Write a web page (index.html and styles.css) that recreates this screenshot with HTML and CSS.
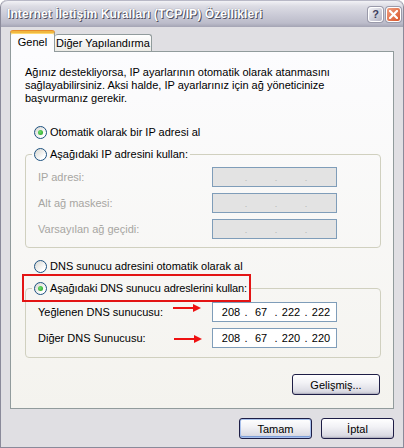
FILE: index.html
```html
<!DOCTYPE html>
<html lang="tr">
<head>
<meta charset="utf-8">
<link rel="stylesheet" href="styles.css">
</head>
<body>
<div class="window">
  <div class="titlebar">
    <span class="title">Internet İletişim Kuralları (TCP/IP) Özellikleri</span>
    <span class="tb-btn help">?</span>
    <span class="tb-btn close"><svg width="9" height="9" viewBox="0 0 9 9"><path d="M1 1 L8 8 M8 1 L1 8" stroke="#fff" stroke-width="2.2" stroke-linecap="square"/></svg></span>
  </div>
  <div class="content">
    <div class="tabs">
      <div class="tab active">Genel</div>
      <div class="tab">Diğer Yapılandırma</div>
    </div>
    <div class="panel">
      <p class="intro">Ağınız destekliyorsa, IP ayarlarının otomatik olarak atanmasını<br>sağlayabilirsiniz. Aksi halde, IP ayarlarınız için ağ yöneticinize<br>başvurmanız gerekir.</p>
      <div class="radio checked opt"><span class="circle"></span>Otomatik olarak bir IP adresi al</div>
      <fieldset class="group">
        <legend><span class="radio"><span class="circle"></span>Aşağıdaki IP adresini kullan:</span></legend>
        <div class="field disabled"><span class="lbl">IP adresi:</span><span class="ip"><span class="seg"></span><span class="dot">.</span><span class="seg"></span><span class="dot">.</span><span class="seg"></span><span class="dot">.</span><span class="seg"></span></span></div>
        <div class="field disabled"><span class="lbl">Alt ağ maskesi:</span><span class="ip"><span class="seg"></span><span class="dot">.</span><span class="seg"></span><span class="dot">.</span><span class="seg"></span><span class="dot">.</span><span class="seg"></span></span></div>
        <div class="field disabled"><span class="lbl">Varsayılan ağ geçidi:</span><span class="ip"><span class="seg"></span><span class="dot">.</span><span class="seg"></span><span class="dot">.</span><span class="seg"></span><span class="dot">.</span><span class="seg"></span></span></div>
      </fieldset>
      <div class="radio opt dns-auto"><span class="circle"></span>DNS sunucu adresini otomatik olarak al</div>
      <fieldset class="group dns">
        <legend><span class="radio checked tight"><span class="circle"></span>Aşağıdaki DNS sunucu adreslerini kullan:</span></legend>
        <div class="field"><span class="lbl">Yeğlenen DNS sunucusu:</span><span class="ip"><span class="seg">208</span><span class="dot">.</span><span class="seg">67</span><span class="dot">.</span><span class="seg">222</span><span class="dot">.</span><span class="seg">222</span></span></div>
        <div class="field"><span class="lbl">Diğer DNS Sunucusu:</span><span class="ip"><span class="seg">208</span><span class="dot">.</span><span class="seg">67</span><span class="dot">.</span><span class="seg">220</span><span class="dot">.</span><span class="seg">220</span></span></div>
      </fieldset>
      <div class="adv-row"><button class="btn adv">Gelişmiş...</button></div>
      <div class="redbox"></div>
      <svg class="arrow a1" width="28" height="8" viewBox="0 0 28 8"><rect x="0" y="3" width="21" height="2" fill="#ee1111"/><path d="M20 0 L28 4 L20 8 Z" fill="#ee1111"/></svg>
      <svg class="arrow a2" width="28" height="8" viewBox="0 0 28 8"><rect x="0" y="3" width="21" height="2" fill="#ee1111"/><path d="M20 0 L28 4 L20 8 Z" fill="#ee1111"/></svg>
    </div>
    <div class="actions">
      <button class="btn default">Tamam</button>
      <button class="btn">İptal</button>
    </div>
  </div>
</div>
</body>
</html>
```
FILE: styles.css
```css
html, body {
  margin: 0;
  padding: 0;
  background: #ffffff;
}
body {
  font-family: "Liberation Sans", Arial, sans-serif;
  font-size: 11px;
  color: #000;
}
.window {
  width: 404px;
  height: 448px;
  box-sizing: border-box;
  background: #e0dfe3;
  border: 1px solid #8a8a9a;
  border-top: none;
  border-radius: 7px 7px 0 0;
  overflow: hidden;
  display: flex;
  flex-direction: column;
}
.titlebar {
  height: 26px;
  flex: none;
  display: flex;
  align-items: center;
  padding: 0 2px 0 6px;
  background: linear-gradient(#f2f2f6 0%, #dcdce4 20%, #cacad6 55%, #bcbcca 85%, #a4a4b4 100%);
  border-top: 1px solid #b8b8c6;
  border-radius: 7px 7px 0 0;
}
.title {
  flex: 1;
  font-weight: bold;
  font-size: 12px;
  color: #ffffff;
  text-shadow: 1px 1px 0 #4f4f60, 0 0 1px #6a6a7a;
  letter-spacing: 0.1px;
  white-space: nowrap;
}
.tb-btn {
  width: 15px;
  height: 15px;
  box-sizing: border-box;
  border: 1px solid #ffffff;
  border-radius: 3px;
  display: flex;
  align-items: center;
  justify-content: center;
  margin-left: 3px;
  box-shadow: 0 0 0 1px #9a9aaa;
}
.help {
  background: linear-gradient(135deg, #f2f2f6, #b4b4c4);
  color: #3c3c5c;
  font-weight: bold;
  font-size: 11px;
}
.close {
  background: linear-gradient(135deg, #f0a080, #d9542a);
}
.content {
  flex: 1;
  padding: 4px 9px 0;
}
.tabs {
  height: 21px;
  display: flex;
  align-items: flex-end;
  margin-bottom: -1px;
  position: relative;
  z-index: 1;
}
.tab {
  height: 17px;
  box-sizing: border-box;
  width: 97px;
  margin-bottom: 1px;
  border: 1px solid #919b9c;
  border-bottom: none;
  border-left: none;
  border-radius: 3px 3px 0 0;
  background: linear-gradient(#ffffff, #ecebe6);
  text-align: center;
  line-height: 16px;
  white-space: nowrap;
}
.tab.active {
  width: 45px;
  height: 21px;
  margin-bottom: 0;
  border-left: 1px solid #919b9c;
  border-top: 2px solid #f0b840;
  box-shadow: inset 0 1px 0 #ffd870, 0 -1px 0 #e68b2c;
  background: #fcfcfe;
  line-height: 19px;
}
.panel {
  position: relative;
  width: 384px;
  height: 358px;
  box-sizing: border-box;
  border: 1px solid #919b9c;
  background: linear-gradient(#fcfcfe, #f4f3ee);
  padding: 14px 12px 0 14px;
}
.intro {
  margin: 0;
  line-height: 13px;
  white-space: nowrap;
}
.radio {
  display: flex;
  align-items: center;
  height: 14px;
  line-height: 14px;
  white-space: nowrap;
}
.radio.tight {
  letter-spacing: -0.12px;
}
.radio .circle {
  flex: none;
  position: relative;
  width: 13px;
  height: 13px;
  box-sizing: border-box;
  border: 1px solid #1c5180;
  border-radius: 50%;
  background: linear-gradient(135deg, #d6d6d0, #ffffff 75%);
  margin-right: 3px;
}
.radio.checked .circle::after {
  content: "";
  position: absolute;
  left: 3px;
  top: 3px;
  width: 5px;
  height: 5px;
  border-radius: 50%;
  background: radial-gradient(circle at 40% 40%, #6ee06e, #1f9a1f);
}
.opt {
  margin-left: 9px;
  margin-top: 20px;
}
.dns-auto {
  margin-top: 11px;
}
.group {
  margin: 8px 0 0;
  min-width: 0;
  padding: 6px 43px 8px 12px;
  border: 1px solid #d0d0bf;
  border-radius: 4px;
}
.group.dns {
  padding-top: 7px;
  padding-bottom: 9px;
}
.group legend {
  padding: 0 2px;
  margin-left: -6px;
}
.field {
  display: flex;
  align-items: center;
  justify-content: space-between;
  height: 20px;
}
.field + .field {
  margin-top: 6px;
}
.field.disabled .lbl {
  color: #a7a6a2;
}
.ip {
  width: 125px;
  height: 20px;
  box-sizing: border-box;
  border: 1px solid #7f9db9;
  background: #ffffff;
  display: flex;
  align-items: center;
  padding-left: 6px;
}
.field.disabled .ip {
  background: #e3e3e3;
  color: #a7a6a2;
}
.seg {
  width: 24px;
  text-align: center;
}
.dot {
  width: 6px;
  text-align: center;
}
.field.disabled .dot {
  color: #b4b4b4;
  font-size: 9px;
  padding-top: 2px;
}
.adv-row {
  display: flex;
  justify-content: flex-end;
  margin-top: 16px;
  padding-right: 1px;
}
.btn {
  font-family: "Liberation Sans", Arial, sans-serif;
  font-size: 11px;
  color: #000;
  height: 21px;
  box-sizing: border-box;
  border: 1px solid #1e1e46;
  border-radius: 3px;
  background: linear-gradient(#ffffff 0%, #f2f2f6 40%, #dcdce4 85%, #c2c2ce 100%);
  padding: 0;
  box-shadow: inset 0 -1px 0 #b4b4c2;
}
.adv {
  width: 88px;
}
.actions {
  display: flex;
  justify-content: flex-end;
  gap: 9px;
  margin-top: 9px;
}
.actions .btn {
  width: 73px;
}
.btn.default {
  box-shadow: inset 0 0 0 1px #a8c0ec, inset 0 -1px 0 1px #7d9ed8;
}
.redbox {
  position: absolute;
  left: 11px;
  top: 222px;
  width: 229px;
  height: 28px;
  box-sizing: border-box;
  border: 2px solid #e31414;
}
.arrow {
  position: absolute;
}
.a1 {
  left: 162px;
  top: 252px;
}
.a2 {
  left: 163px;
  top: 283px;
}
```
